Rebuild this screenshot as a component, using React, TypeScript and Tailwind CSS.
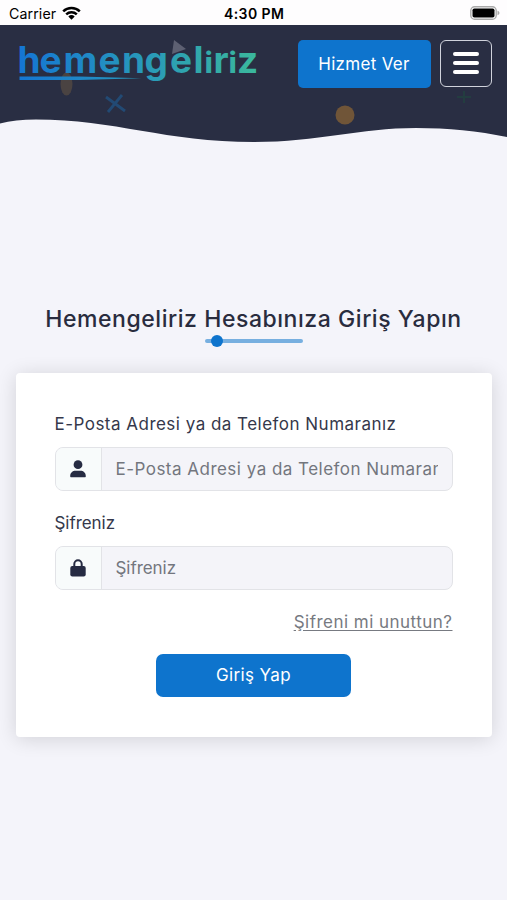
import React from "react";

interface FieldProps {
  id: string;
  label: string;
  placeholder: string;
  type: string;
  icon: React.ReactNode;
  textClass: string;
}

const UserIcon = () => (
  <svg className="h-[18px] w-4" viewBox="0 0 16 18" fill="currentColor">
    <circle cx="8" cy="4.700" r="4.400" />
    <path d="M0.200 16.200c0-3.400 2.400-5.400 5.400-5.400h4.800c3 0 5.400 2 5.400 5.400 0 .7-.4 1.100-1 1.100H1.200c-.6 0-1-.4-1-1.100z" />
  </svg>
);

const LockIcon = () => (
  <svg className="h-[18px] w-4" viewBox="0 0 16 18">
    <path d="M4.300 8V5a3.700 3.700 0 0 1 7.400 0v3" fill="none" stroke="currentColor" strokeWidth="2" />
    <rect x="0.300" y="7" width="15.400" height="10.500" rx="2" fill="currentColor" />
  </svg>
);

const StatusBar = () => (
  <div className="relative flex h-[25px] items-center justify-between bg-[#fefdfe] pl-[9px] pr-[7px] pt-[3px] text-black">
    <div className="flex items-center gap-[6px]">
      <span className="text-[14.200px] leading-none tracking-[0.100px]">Carrier</span>
      <svg className="mt-[-2px] h-[14px] w-[19px]" viewBox="0 0 19 14">
        <g fill="none" stroke="currentColor" strokeWidth="2.500">
          <path d="M1.200 5.300a11.900 11.900 0 0 1 16.600 0" />
          <path d="M4.200 8.400a7.700 7.700 0 0 1 10.600 0" />
        </g>
        <path d="M6.300 10.600a4.700 4.700 0 0 1 6.400 0L9.500 13.800z" fill="currentColor" />
      </svg>
    </div>
    <span className="absolute left-[224px] top-[7px] text-[14px] font-semibold leading-[14px] tracking-[0.400px]">
      4:30 PM
    </span>
    <svg className="mt-[-3px] h-[14px] w-[30px]" viewBox="0 0 30 14">
      <rect x="0.800" y="0.800" width="25.400" height="12.400" rx="3.800" fill="#fff" stroke="#aaa" strokeWidth="1.400" />
      <rect x="2.500" y="2.500" width="22" height="9" rx="1.800" fill="#000" />
      <path d="M27.500 4.800c2.600.7 2.600 3.700 0 4.400z" fill="#aaa" />
    </svg>
  </div>
);

const Logo = () => (
  <svg className="h-[48px] w-[242px] overflow-visible" viewBox="0 0 242 48" role="img" aria-label="hemengeliriz">
    <defs>
      <linearGradient id="brand" gradientUnits="userSpaceOnUse" x1="0" y1="0" x2="242" y2="0">
        <stop offset="0" stopColor="#1475d4" />
        <stop offset="0.500" stopColor="#2797bb" />
        <stop offset="1" stopColor="#3bb89c" />
      </linearGradient>
    </defs>
    {/* the two i's are drawn smaller so their dots stay inside the x-height */}
    <text
      x="1.500 23.500 47.500 82.500 106 128.500 154 177.500 188.700 197.500 212.700 221"
      y="33"
      fill="url(#brand)"
      className="font-['Inter'] text-[37px] font-bold"
    >
      hemengel<tspan className="text-[28px] font-extrabold">i</tspan>r
      <tspan className="text-[28px] font-extrabold">i</tspan>z
    </text>
    <path d="M3.500 36.500h60l62 1.700L63.500 40H3.500z" fill="url(#brand)" />
  </svg>
);

const Header = () => (
  <header className="relative h-[120px]">
    <svg className="absolute inset-0 h-[120px] w-full" viewBox="0 25 507 120" preserveAspectRatio="none">
      <path
        d="M0 25H507V137C478 131 448 128 416 128C360 128 318 142 254 142C165 142 115 119.500 36 119.500C22 119.500 10 121 0 123.500Z"
        fill="#292e43"
      />
      <ellipse cx="66.500" cy="84" rx="6" ry="11.500" fill="#4a4342" />
      <path d="M106 97l19 14M122 95l-14 17" stroke="#224a74" strokeWidth="2.800" fill="none" />
      <circle cx="345" cy="115" r="9.500" fill="#705538" />
      <path d="M457 97h14M464 91v12" stroke="#233d40" strokeWidth="2" fill="none" />
      <path d="M174 40l12 9-14 5z" fill="#5d6072" />
    </svg>
    <div className="relative flex items-start pl-4 pr-[15px] pt-[14.500px]">
      <Logo />
      <a
        href="#"
        className="ml-auto flex h-[48px] w-[133px] items-center justify-center rounded-[5px] bg-[#0e74cd] pt-[2px] text-[17px] tracking-[0.300px] text-white"
      >
        Hizmet Ver
      </a>
      <button
        aria-label="Menu"
        className="ml-[9px] flex h-[47px] w-[52.500px] flex-col items-center justify-center gap-[5px] rounded-[6px] border-[1.500px] border-[#d0d3dc] pb-px"
      >
        <span className="h-1 w-[26px] rounded-full bg-white" />
        <span className="h-1 w-[26px] rounded-full bg-white" />
        <span className="h-1 w-[26px] rounded-full bg-white" />
      </button>
    </div>
  </header>
);

const Field: React.FC<FieldProps> = ({ id, label, placeholder, type, icon, textClass }) => (
  <div className={textClass}>
    <label
      htmlFor={id}
      className="block h-[25px] whitespace-nowrap text-[17px] leading-[25px] text-[#35384b]"
    >
      {label}
    </label>
    <div className="mt-[10px] flex h-[44px] overflow-hidden rounded-[8px] border border-[#e2e3e7] bg-[#f4f4f9]">
      <span className="flex w-[46px] shrink-0 items-center justify-center border-r border-[#e2e3e7] bg-[#f8fbfb] text-[#262b42]">
        {icon}
      </span>
      <input
        id={id}
        type={type}
        placeholder={placeholder}
        className="mx-[14px] min-w-0 flex-1 bg-transparent pt-[2px] text-[17px] outline-none placeholder:text-[#73767e]"
      />
    </div>
  </div>
);

const App = () => {
  return (
    <div className="h-[900px] w-full overflow-hidden bg-[#f4f4fa] font-['Inter',sans-serif]">
      <StatusBar />
      <Header />

      <main className="px-[15.500px] pt-[155px]">
        {/* Title */}
        <div className="flex h-[72.500px] flex-col items-center">
          <h1 className="mt-[1px] whitespace-nowrap text-[23px] font-medium leading-9 tracking-[0.550px] text-[#292c3e]">
            Hemengeliriz Hesabınıza Giriş Yapın
          </h1>
          <div className="relative mt-[2px] h-1 w-[98px] rounded-full bg-[#77afe0]">
            <span className="absolute -top-1 left-[6px] size-3 rounded-full bg-[#0e74cd]" />
          </div>
        </div>

        {/* Login card */}
        <form className="h-[364px] rounded-[4px] bg-white px-[39px] pt-[39.500px] shadow-[0_2px_20px_rgba(0,0,0,0.140)]">
          <Field
            id="account"
            type="text"
            label="E-Posta Adresi ya da Telefon Numaranız"
            placeholder="E-Posta Adresi ya da Telefon Numaranız"
            icon={<UserIcon />}
            textClass="tracking-[0.480px]"
          />
          <div className="mt-5">
            <Field
              id="password"
              type="password"
              label="Şifreniz"
              placeholder="Şifreniz"
              icon={<LockIcon />}
              textClass="tracking-[-0.050px]"
            />
          </div>
          <div className="mt-5 text-right">
            <a
              href="#"
              className="text-[17px] leading-6 tracking-[0.480px] text-[#777a81] underline underline-offset-[2px]"
            >
              Şifreni mi unuttun?
            </a>
          </div>
          <button
            type="button"
            className="mx-auto mt-[20px] flex h-[43px] w-[195px] items-center justify-center rounded-[7px] bg-[#0e74cd] pt-px text-[17px] tracking-[0.400px] text-white"
          >
            Giriş Yap
          </button>
        </form>
      </main>
    </div>
  );
};

export default App;
